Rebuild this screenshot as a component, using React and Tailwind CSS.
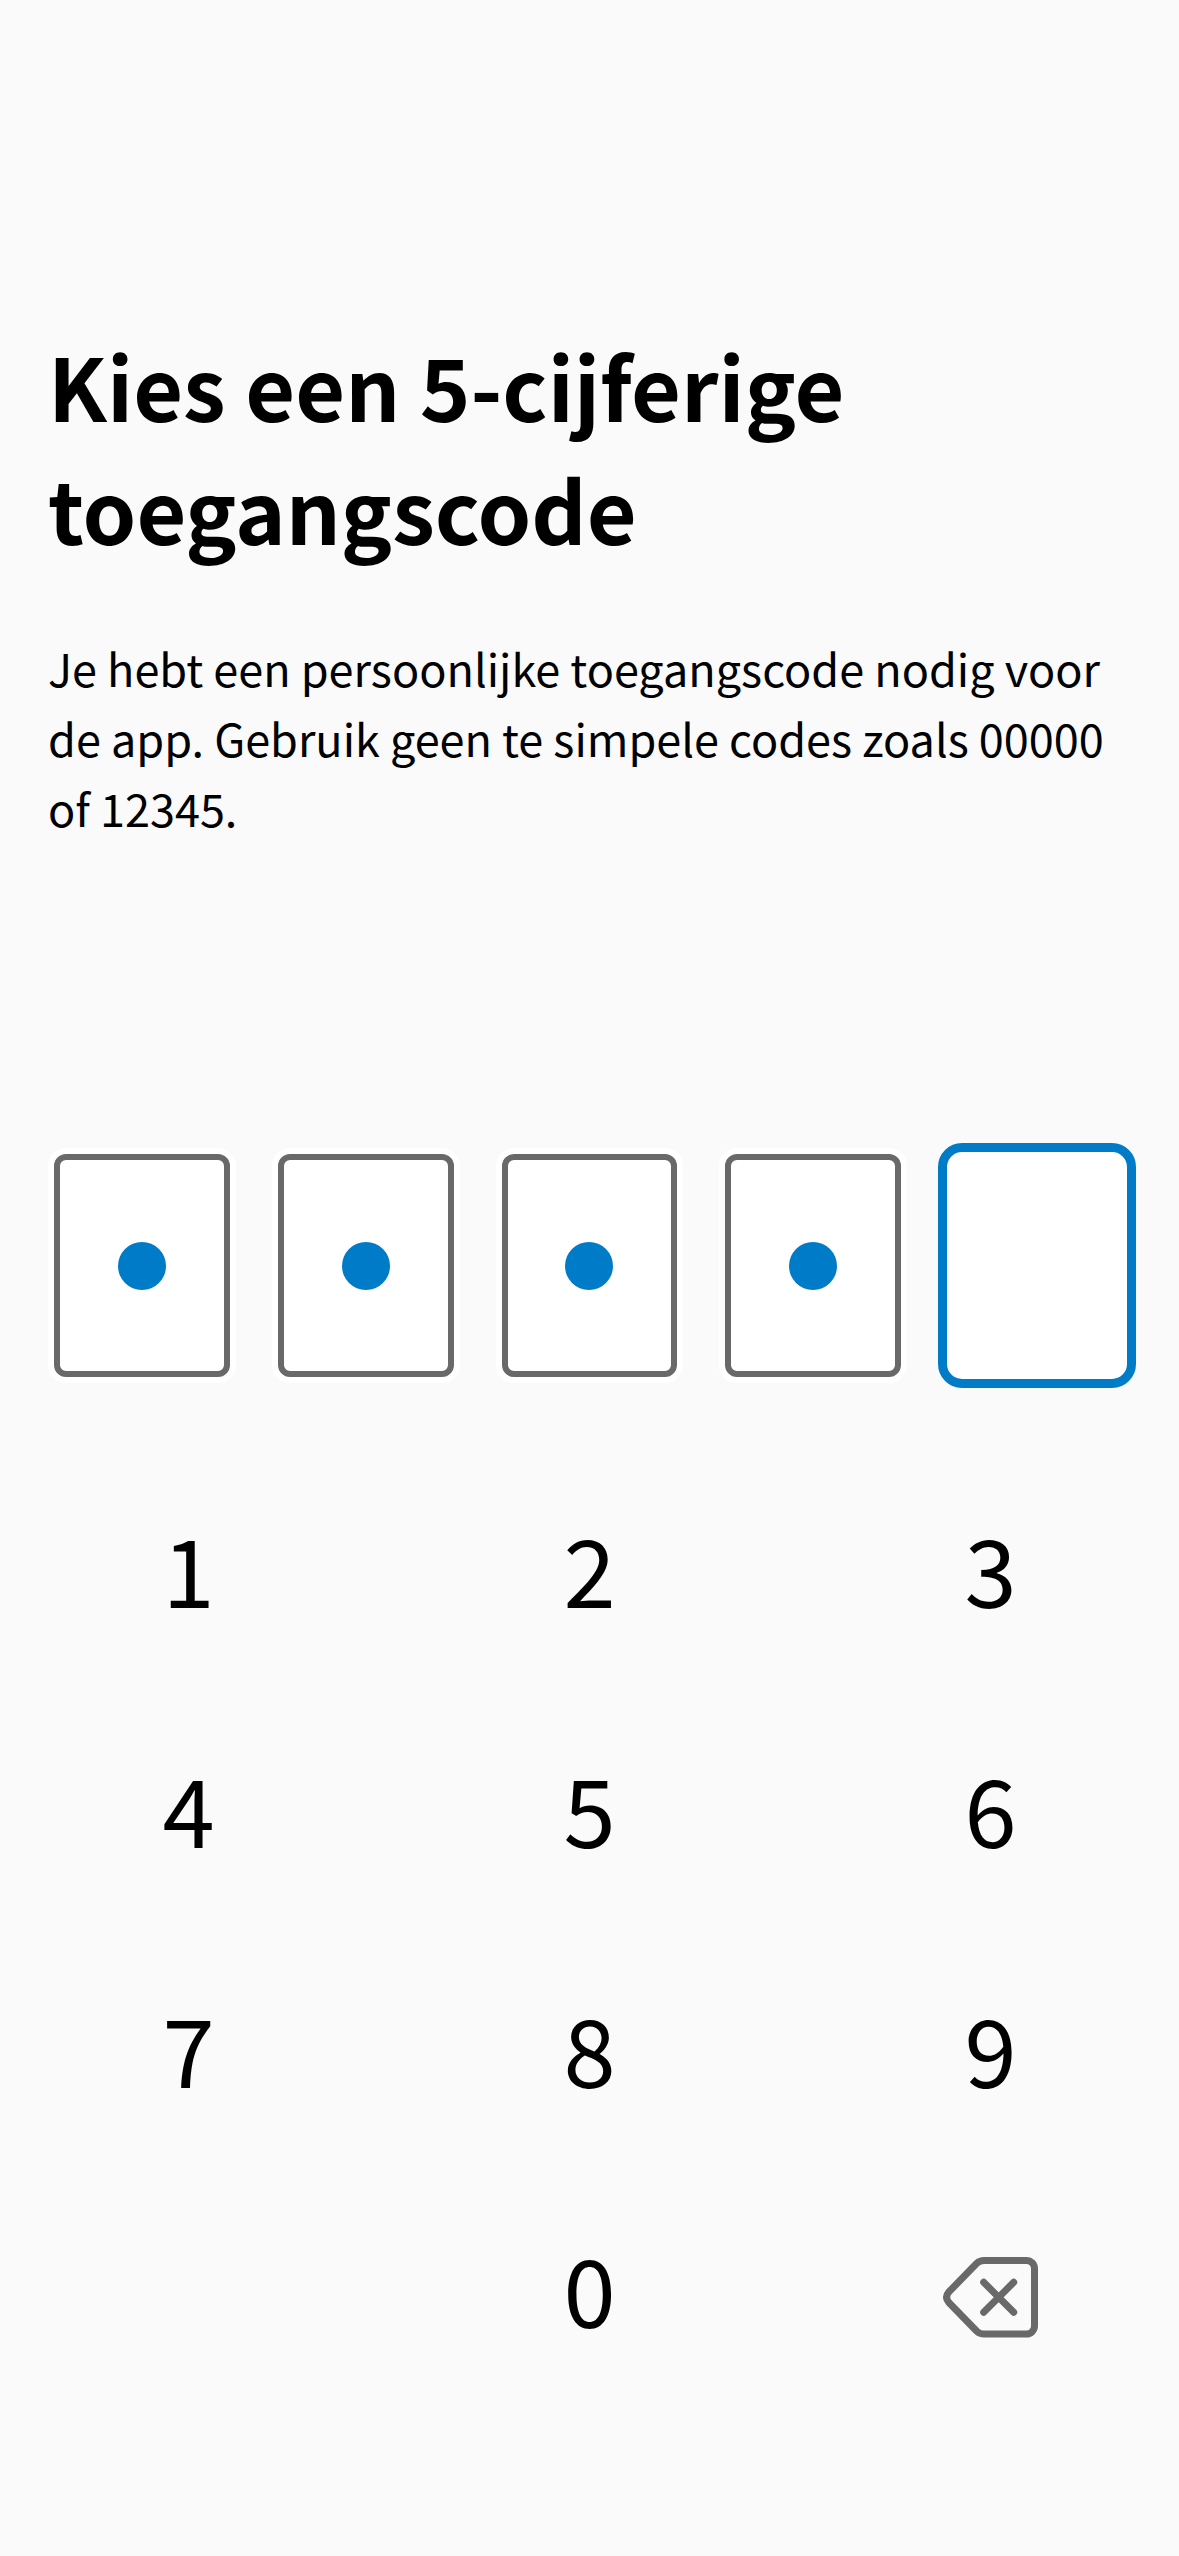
import React, { useState } from "react";

const CODE_LENGTH = 5;
const DIGITS = ["1", "2", "3", "4", "5", "6", "7", "8", "9"];

function CodeBox({ index, value, active }) {
  const filled = value !== "";
  return (
    <div
      className={
        active
          ? "-m-[5px] grid rounded-3xl border-[9px] border-[#007bc7] bg-white"
          : "grid rounded-[18px] bg-white p-1.5"
      }
    >
      <input
        type="password"
        inputMode="none"
        readOnly
        value={value}
        aria-label={`Cijfer ${index + 1}`}
        className={
          active
            ? "col-start-1 row-start-1 size-full min-w-0 rounded-2xl bg-transparent text-transparent outline-none"
            : "col-start-1 row-start-1 size-full min-w-0 rounded-xl border-[6px] border-[#696969] bg-transparent text-transparent outline-none"
        }
      />
      {filled && (
        <span
          aria-hidden="true"
          className="pointer-events-none col-start-1 row-start-1 size-12 place-self-center rounded-full bg-[#007bc7]"
        />
      )}
    </div>
  );
}

function BackspaceIcon() {
  return (
    <svg
      viewBox="0 0 95 81"
      className="h-[81px] w-[95px]"
      fill="none"
      stroke="currentColor"
      strokeWidth="7"
      strokeLinecap="round"
      strokeLinejoin="round"
      aria-hidden="true"
    >
      <path d="M41 3.5H83.5A8 8 0 0 1 91.5 11.5V69A8 8 0 0 1 83.5 77H41Q36.8 77 33.8 74.2L5.8 45.5Q1.4 40.3 5.8 35L33.8 6.3Q36.8 3.5 41 3.5Z" />
      <path d="M40.7 25.3L70.7 55.3M70.7 25.3L40.7 55.3" />
    </svg>
  );
}

function Key({ digit, onPress, className }) {
  return (
    <button type="button" onClick={() => onPress(digit)} className={className}>
      {digit}
    </button>
  );
}

export default function App() {
  const [code, setCode] = useState("2847");

  const press = (digit) =>
    setCode((c) => (c.length < CODE_LENGTH ? c + digit : c));
  const erase = () => setCode((c) => c.slice(0, -1));

  return (
    <main className="flex min-h-screen flex-col bg-[#fafafa] pt-[323px] font-['Noto_Sans_CJK_SC',sans-serif] text-black">
      <header className="px-12">
        <h1 className="text-[86px] leading-[123px] font-bold">
          Kies een 5-cijferige
          <br />
          toegangscode
        </h1>
        <p className="mt-16 text-[45px] leading-[70px]">
          Je hebt een persoonlijke toegangscode nodig voor
          <br />
          de app. Gebruik geen te simpele codes zoals 00000
          <br />
          of 12345.
        </p>
      </header>

      <form
        aria-label="Toegangscode"
        className="mt-[305px] grid h-[235px] grid-cols-5 gap-9 px-12"
      >
        {Array.from({ length: CODE_LENGTH }, (_, i) => (
          <CodeBox
            key={i}
            index={i}
            value={code[i] ?? ""}
            active={i === code.length}
          />
        ))}
      </form>

      <section
        aria-label="Toetsenblok"
        className="mt-19 grid auto-rows-[216px] grid-cols-3 gap-6 text-[94px] leading-none"
      >
        {DIGITS.map((d) => (
          <Key key={d} digit={d} onPress={press} />
        ))}
        <Key digit="0" onPress={press} className="col-start-2" />
        <button
          type="button"
          onClick={erase}
          aria-label="Wissen"
          className="flex items-center justify-center pt-5 text-[#696969]"
        >
          <BackspaceIcon />
        </button>
      </section>
    </main>
  );
}
